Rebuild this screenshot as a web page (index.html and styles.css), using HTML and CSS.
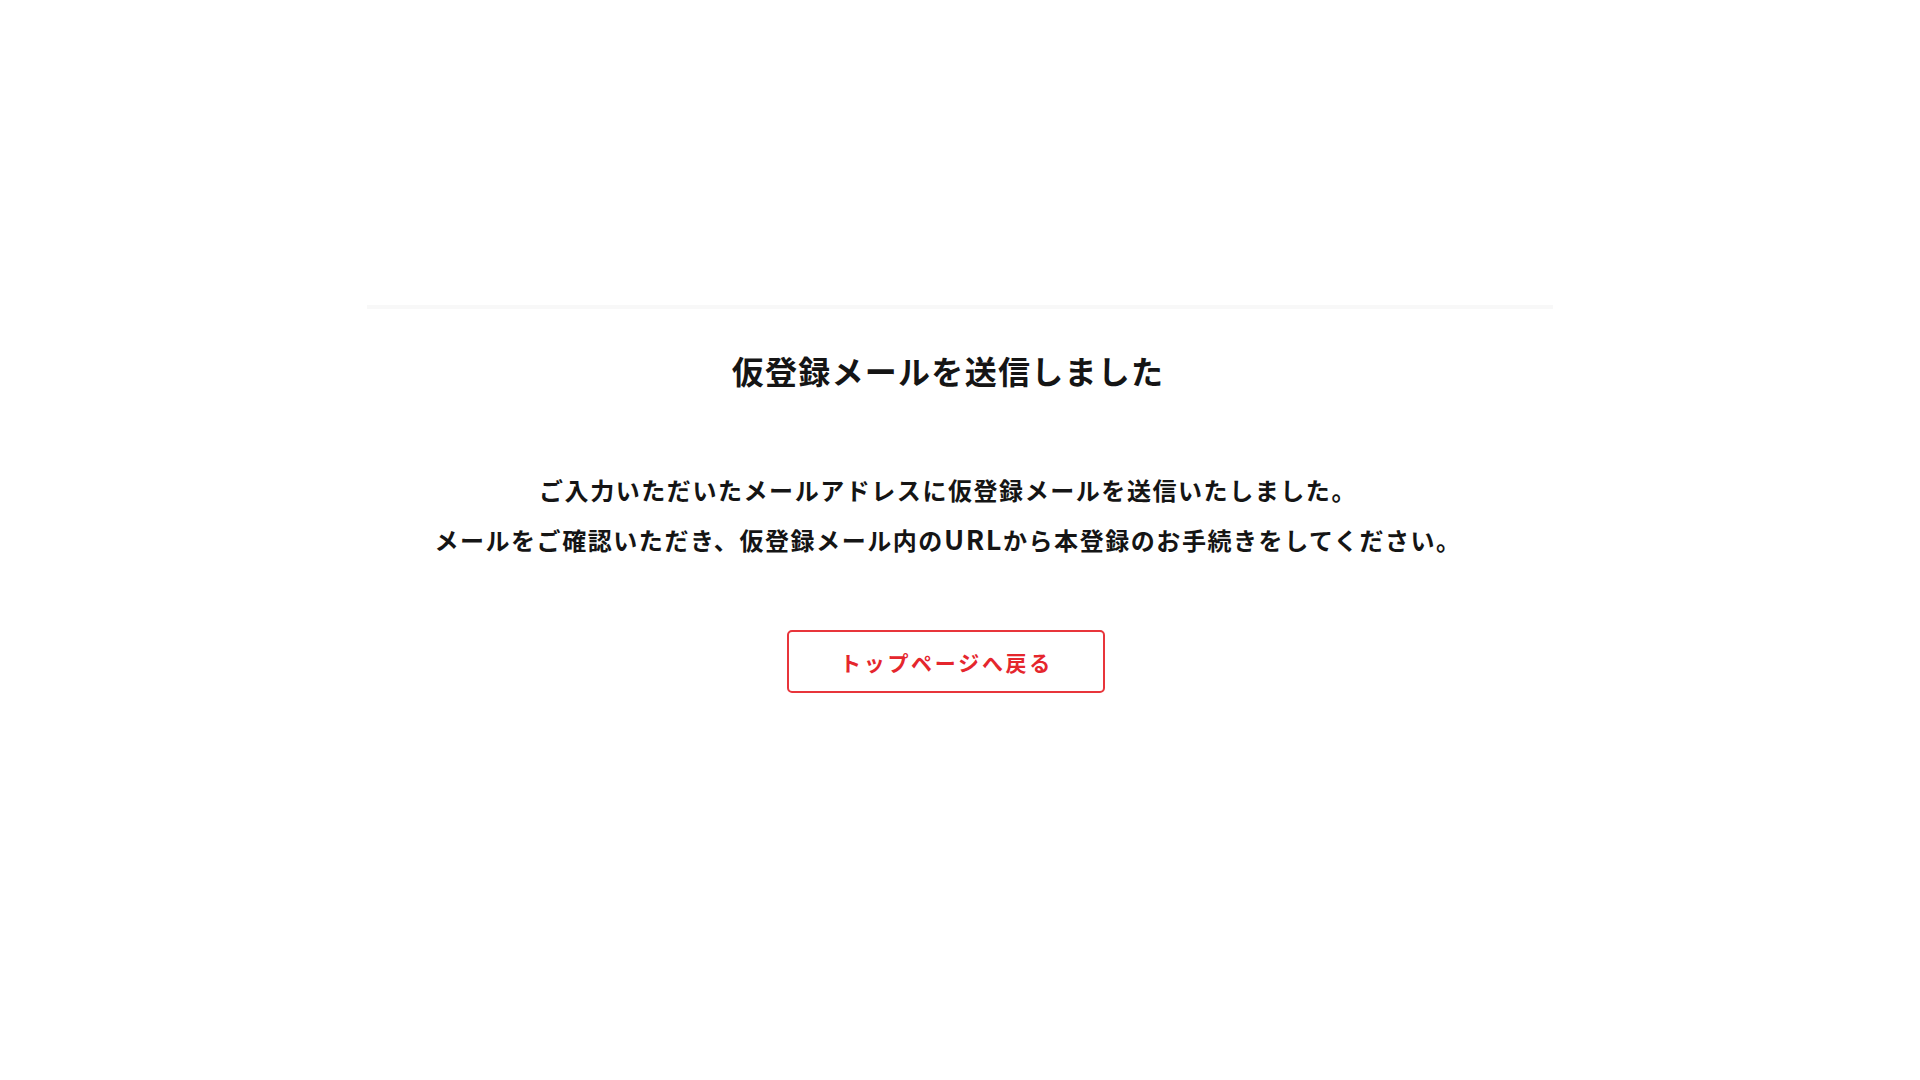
FILE: index.html
```html
<!DOCTYPE html>
<html lang="ja">
<head>
<meta charset="utf-8">
<title>仮登録メールを送信しました</title>
<link rel="stylesheet" href="styles.css">
</head>
<body>
<main class="panel">
  <div class="content">
    <h1 class="title">仮登録メールを送信しました</h1>
    <p class="message">ご入力いただいたメールアドレスに仮登録メールを送信いたしました。<br>メールをご確認いただき、仮登録メール内の<span class="latin">URL</span>から本登録のお手続きをしてください。</p>
    <div class="actions">
      <a class="btn" href="#">トップページへ戻る</a>
    </div>
  </div>
</main>
</body>
</html>
```
FILE: styles.css
```css
html, body {
  margin: 0;
  padding: 0;
  background: #ffffff;
}
body {
  font-family: "Noto Sans CJK JP", "Noto Sans", sans-serif;
  color: #151515;
}
.panel {
  width: 1186px;
  margin: 305px auto 0;
  border-top: 4px solid #f8f8f8;
}
.content {
  display: flex;
  flex-direction: column;
  align-items: center;
  padding: 37px 24px 0 0;
}
.title {
  margin: 0;
  font-size: 32px;
  line-height: 48px;
  font-weight: 700;
  letter-spacing: 0.04em;
  text-align: center;
}
.message {
  margin: 71px 0 0;
  font-size: 24px;
  line-height: 50px;
  font-weight: 700;
  letter-spacing: 0.065em;
  text-align: center;
}
.latin {
  font-size: 27px;
  line-height: 1;
  letter-spacing: 0.06em;
}
.actions {
  margin-top: 65px;
  display: flex;
  justify-content: center;
}
.btn {
  box-sizing: border-box;
  width: 318px;
  height: 63px;
  margin-right: 5px;
  display: flex;
  align-items: center;
  justify-content: center;
  border: 2px solid #e8353b;
  border-radius: 5px;
  color: #e5262d;
  text-decoration: none;
  font-size: 21px;
  font-weight: 700;
  letter-spacing: 0.13em;
  padding-left: 2px;
}
```
